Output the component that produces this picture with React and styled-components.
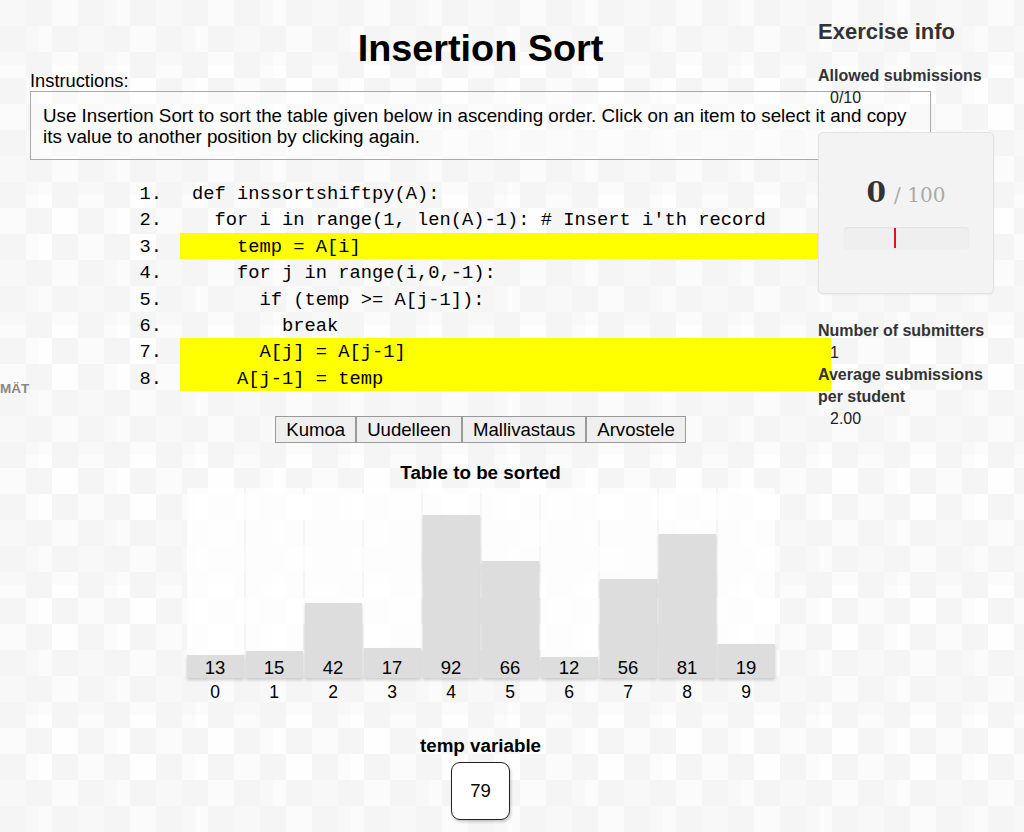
import React from 'react';
import styled, { createGlobalStyle } from 'styled-components';

const GlobalStyle = createGlobalStyle`
  html, body {
    margin: 0;
    padding: 0;
  }
  body {
    font-family: "Liberation Sans", Arial, Helvetica, sans-serif;
    color: #000;
    background-color: #fbfbfb;
    background-image:
      conic-gradient(#f5f5f5 25%, transparent 0 50%, #f5f5f5 0 75%, transparent 0),
      conic-gradient(transparent 25%, #fefefe 0 50%, transparent 0 75%, #f8f8f8 0);
    background-size: 52px 52px, 78px 130px;
  }
`;

const Page = styled.div`
  position: relative;
  min-height: 832px;
  overflow: hidden;
`;

const EdgeLabel = styled.div`
  position: absolute;
  left: 0;
  top: 381px;
  font-size: 13.5px;
  font-weight: bold;
  color: #888;
`;

const Main = styled.div`
  margin-left: 30px;
  width: 901px;
  display: flex;
  flex-direction: column;
`;

const Title = styled.h1`
  margin: 0;
  padding-top: 26px;
  font-size: 37.8px;
  line-height: 44px;
  font-weight: bold;
  text-align: center;
`;

const Label = styled.div`
  font-size: 18.3px;
  line-height: 21px;
`;

const InstructionBox = styled.div`
  border: 1px solid #aaa;
  padding: 13px 12px 12px;
  font-size: 18.8px;
  line-height: 21px;
  background: rgba(255, 255, 255, 0.4);
`;

const CodeList = styled.div`
  margin: 20px 0 0 92px;
  font-family: "Liberation Mono", "Courier New", monospace;
  font-size: 18.75px;
`;

const CodeRow = styled.div`
  display: flex;
  gap: 18px;
  height: 26.4px;
`;

const LineNo = styled.span`
  width: 40px;
  text-align: right;
  padding-top: 3px;
  line-height: 23.4px;
`;

const CodeText = styled.span`
  width: 651px;
  padding: 3px 0 0 12px;
  line-height: 23.4px;
  box-sizing: border-box;
  white-space: pre;
  background: ${(p) => (p.$hl ? '#ffff00' : 'transparent')};
`;

const ButtonBar = styled.div`
  display: flex;
  justify-content: center;
  margin-top: 25px;
`;

const Button = styled.button`
  font-family: inherit;
  font-size: 18.6px;
  height: 27px;
  padding: 0 10px;
  margin: 0;
  border: 1px solid #9a9a9a;
  background: #efefef;
  color: #000;
  cursor: pointer;
`;

const Caption = styled.div`
  text-align: center;
  font-size: 18.8px;
  font-weight: bold;
  line-height: 21px;
  margin-top: ${(p) => p.$top}px;
`;

const Chart = styled.div`
  display: flex;
  justify-content: center;
  gap: 2px;
  margin-top: 5px;
`;

const Column = styled.div`
  width: 57px;
  display: flex;
  flex-direction: column;
  align-items: center;
`;

const BarArea = styled.div`
  width: 100%;
  height: 190px;
  display: flex;
  align-items: flex-end;
  background: rgba(255, 255, 255, 0.75);
`;

const Bar = styled.div`
  width: 100%;
  background: #dddddd;
  box-shadow: 0 2px 3px rgba(0, 0, 0, 0.18);
  display: flex;
  align-items: flex-end;
  justify-content: center;
  font-size: 18.5px;
  line-height: 21px;
`;

const Index = styled.div`
  margin-top: 3px;
  font-size: 17.5px;
  line-height: 22px;
`;

const TempBox = styled.div`
  align-self: center;
  margin-top: 6px;
  width: 59px;
  height: 58px;
  box-sizing: border-box;
  border: 1.5px solid #222;
  border-radius: 9px;
  background: #fff;
  box-shadow: 1px 2px 3px rgba(0, 0, 0, 0.2);
  display: flex;
  align-items: center;
  justify-content: center;
  font-size: 18.5px;
`;

const Sidebar = styled.aside`
  position: absolute;
  top: 0;
  left: 818px;
  width: 176px;
  color: #333;
  font-size: 16px;
`;

const InfoTitle = styled.h2`
  margin: 19px 0 0;
  font-size: 22px;
  line-height: 26px;
  font-weight: bold;
`;

const InfoLabel = styled.div`
  font-weight: bold;
  line-height: 22px;
  margin-top: ${(p) => p.$top || 0}px;
`;

const InfoValue = styled.div`
  padding-left: 12px;
  line-height: 22px;
  color: #222;
`;

const ScoreBox = styled.div`
  margin-top: 23px;
  height: 162px;
  box-sizing: border-box;
  border: 1px solid #e2e2e2;
  border-radius: 5px;
  background: #f3f3f3;
  box-shadow: 0 1px 2px rgba(0, 0, 0, 0.05);
  display: flex;
  flex-direction: column;
  align-items: center;
  padding-top: 43px;
`;

const Score = styled.div`
  font-family: "DejaVu Serif", "Liberation Serif", Georgia, serif;
  line-height: 34px;
  display: flex;
  align-items: baseline;
  gap: 8px;
`;

const Points = styled.span`
  font-size: 28px;
  font-weight: bold;
  color: #333;
`;

const MaxPoints = styled.span`
  font-size: 20px;
  color: #aaa;
`;

const Progress = styled.div`
  position: relative;
  margin-top: 15px;
  width: 125px;
  height: 23px;
  border-radius: 4px;
  background: #efefef;
  box-shadow: inset 0 1px 2px rgba(0, 0, 0, 0.06);
`;

const Tick = styled.div`
  position: absolute;
  left: 50px;
  top: 1px;
  width: 2px;
  height: 20px;
  background: #e0141e;
`;

const code = [
  { text: 'def inssortshiftpy(A):' },
  { text: "  for i in range(1, len(A)-1): # Insert i'th record" },
  { text: '    temp = A[i]', hl: true },
  { text: '    for j in range(i,0,-1):' },
  { text: '      if (temp >= A[j-1]):' },
  { text: '        break' },
  { text: '      A[j] = A[j-1]', hl: true },
  { text: '    A[j-1] = temp', hl: true },
];

const values = [13, 15, 42, 17, 92, 66, 12, 56, 81, 19];

export default function App() {
  return (
    <Page>
      <GlobalStyle />
      <EdgeLabel>MÄT</EdgeLabel>
      <Main>
        <Title>Insertion Sort</Title>
        <Label>Instructions:</Label>
        <InstructionBox>
          Use Insertion Sort to sort the table given below in ascending order. Click on an item to
          select it and copy its value to another position by clicking again.
        </InstructionBox>

        <CodeList>
          {code.map((line, i) => (
            <CodeRow key={i}>
              <LineNo>{i + 1}.</LineNo>
              <CodeText $hl={line.hl}>{line.text}</CodeText>
            </CodeRow>
          ))}
        </CodeList>

        <ButtonBar>
          <Button>Kumoa</Button>
          <Button>Uudelleen</Button>
          <Button>Mallivastaus</Button>
          <Button>Arvostele</Button>
        </ButtonBar>

        <Caption $top={19}>Table to be sorted</Caption>
        <Chart>
          {values.map((v, i) => (
            <Column key={i}>
              <BarArea>
                <Bar style={{ height: Math.round(v * 1.775) }}>{v}</Bar>
              </BarArea>
              <Index>{i}</Index>
            </Column>
          ))}
        </Chart>

        <Caption $top={32}>temp variable</Caption>
        <TempBox>79</TempBox>
      </Main>

      <Sidebar>
        <InfoTitle>Exercise info</InfoTitle>
        <InfoLabel $top={20}>Allowed submissions</InfoLabel>
        <InfoValue>0/10</InfoValue>
        <ScoreBox>
          <Score>
            <Points>0</Points>
            <MaxPoints>/ 100</MaxPoints>
          </Score>
          <Progress>
            <Tick />
          </Progress>
        </ScoreBox>
        <InfoLabel $top={26}>Number of submitters</InfoLabel>
        <InfoValue>1</InfoValue>
        <InfoLabel>Average submissions per student</InfoLabel>
        <InfoValue>2.00</InfoValue>
      </Sidebar>
    </Page>
  );
}
